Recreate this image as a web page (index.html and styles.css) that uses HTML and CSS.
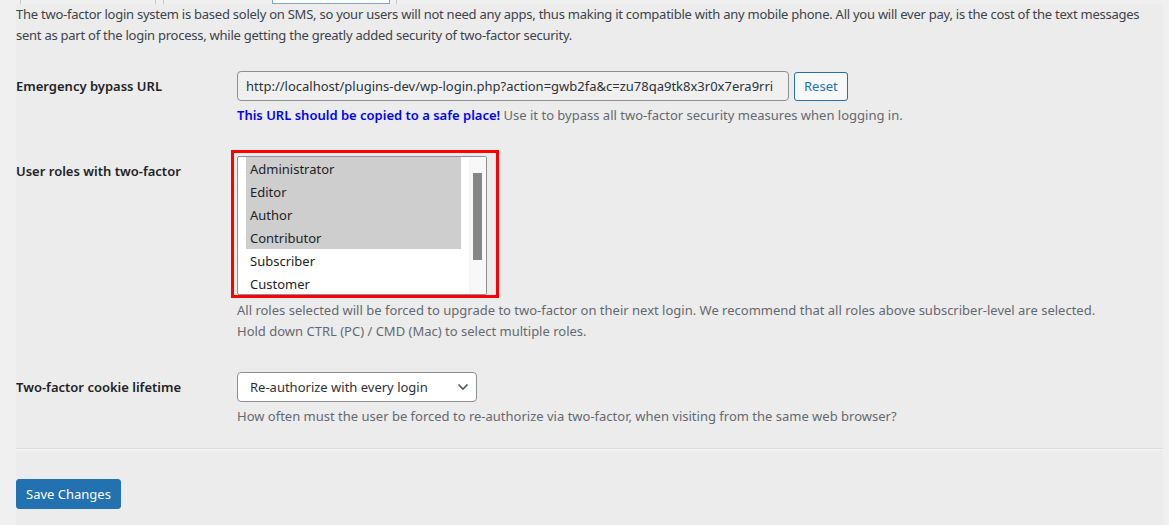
FILE: index.html
```html
<!DOCTYPE html>
<html lang="en">
<head>
<meta charset="utf-8">
<title>Two-factor settings</title>
<link rel="stylesheet" href="styles.css">
</head>
<body>
<div class="tabs">
  <span class="tab tab-a"></span>
  <span class="tab tab-b"></span>
  <span class="tab tab-active"></span>
  <span class="tab tab-d"></span>
</div>
<div class="panel">
  <p class="intro">The two-factor login system is based solely on SMS, so your users will not need any apps, thus making it compatible with any mobile phone. All you will ever pay, is the cost of the text messages sent as part of the login process, while getting the greatly added security of two-factor security.</p>

  <div class="row row-url">
    <div class="label">Emergency bypass URL</div>
    <div class="field">
      <div class="inline">
        <div class="text-input">http://localhost/plugins-dev/wp-login.php?action=gwb2fa&amp;c=zu78qa9tk8x3r0x7era9rri</div>
        <button class="btn-secondary" type="button">Reset</button>
      </div>
      <p class="desc"><strong class="warn">This URL should be copied to a safe place!</strong> Use it to bypass all two-factor security measures when logging in.</p>
    </div>
  </div>

  <div class="row row-roles">
    <div class="label">User roles with two-factor</div>
    <div class="field">
      <div class="highlight">
        <div class="listbox">
          <div class="options">
            <div class="opt selected">Administrator</div>
            <div class="opt selected">Editor</div>
            <div class="opt selected">Author</div>
            <div class="opt selected">Contributor</div>
            <div class="opt">Subscriber</div>
            <div class="opt">Customer</div>
          </div>
          <div class="scrolltrack"><div class="thumb"></div></div>
        </div>
      </div>
      <p class="desc desc-roles">All roles selected will be forced to upgrade to two-factor on their next login. We recommend that all roles above subscriber-level are selected.<br>Hold down CTRL (PC) / CMD (Mac) to select multiple roles.</p>
    </div>
  </div>

  <div class="row row-cookie">
    <div class="label">Two-factor cookie lifetime</div>
    <div class="field">
      <div class="dropdown">
        <span>Re-authorize with every login</span>
        <svg class="chev" width="12" height="8" viewBox="0 0 12 8"><path d="M1.5 1.5 L6 6 L10.5 1.5" fill="none" stroke="#50575e" stroke-width="1.6"/></svg>
      </div>
      <p class="desc">How often must the user be forced to re-authorize via two-factor, when visiting from the same web browser?</p>
    </div>
  </div>

  <hr class="sep">

  <button class="btn-primary" type="button">Save Changes</button>
</div>
</body>
</html>
```

FILE: styles.css
```css
html, body {
  margin: 0;
  padding: 0;
}
body {
  background: #f0f0f1;
  font-family: "Noto Sans", "Open Sans", sans-serif;
  font-size: 13px;
  color: #3c434a;
  width: 1169px;
  height: 525px;
  overflow: hidden;
}
.tabs {
  display: flex;
  height: 4px;
}
.tab {
  height: 4px;
  box-sizing: border-box;
}
.tab-a {
  margin-left: 20px;
  width: 136px;
  border-left: 1px solid #c3c4c7;
  border-right: 1px solid #c3c4c7;
}
.tab-b {
  margin-left: 7px;
  width: 101px;
  border-left: 1px solid #c3c4c7;
}
.tab-active {
  margin-left: 8px;
  width: 118px;
  background: #fff;
  border: 1px solid #7fa6cc;
  border-top: none;
}
.tab-d {
  margin-left: 6px;
  width: 100px;
  border-left: 1px solid #c3c4c7;
}
.panel {
  margin-left: 16px;
  width: 1147px;
  height: 521px;
  background: #ececec;
}
.intro {
  margin: 0;
  line-height: 21px;
  width: 1147px;
  letter-spacing: -0.25px;
}
.row {
  display: grid;
  grid-template-columns: 221px 1fr;
  padding-top: 30px;
}
.row-url {
  padding-top: 25px;
}
.label {
  font-weight: 600;
  color: #1d2327;
  line-height: 30px;
}
.inline {
  display: flex;
  align-items: center;
  gap: 5px;
}
.text-input {
  box-sizing: border-box;
  width: 552px;
  height: 30px;
  border: 1px solid #8c8f94;
  border-radius: 4px;
  background: #f0f0f1;
  color: #2c3338;
  padding: 0 8px;
  line-height: 28px;
  white-space: nowrap;
  overflow: hidden;
}
.btn-secondary {
  box-sizing: border-box;
  height: 29px;
  padding: 0 9px;
  border: 1px solid #2271b1;
  border-radius: 3px;
  background: #f6f7f7;
  color: #2271b1;
  font-family: inherit;
  font-size: 13px;
  line-height: 27px;
}
.desc {
  margin: 4px 0 0;
  line-height: 21px;
  color: #646970;
}
.desc-roles {
  margin-top: 2px;
}
.warn {
  color: #0000ff;
  font-weight: 600;
}
.highlight {
  width: 252px;
  border: 3px solid #ff0000;
  padding: 3px 7px 0 3px;
  margin: -6px 0 0 -6px;
}
.listbox {
  box-sizing: border-box;
  width: 250px;
  height: 139px;
  border: 1px solid #8c8f94;
  border-radius: 2px;
  background: #fff;
  display: flex;
  padding-left: 8px;
  overflow: hidden;
}
.options {
  width: 215px;
}
.opt {
  height: 23px;
  line-height: 24px;
  padding-left: 4px;
  color: #1d2327;
}
.opt.selected {
  background: #cecece;
}
.scrolltrack {
  margin-left: 8px;
  width: 17px;
  background: #f8f8f8;
  display: flex;
  justify-content: center;
  padding-top: 16px;
}
.thumb {
  width: 9px;
  height: 87px;
  background: #868686;
}
.dropdown {
  box-sizing: border-box;
  width: 240px;
  height: 30px;
  border: 1px solid #8c8f94;
  border-radius: 4px;
  background: #fff;
  color: #2c3338;
  display: flex;
  align-items: center;
  justify-content: space-between;
  padding: 0 7px 0 12px;
}
.chev {
  display: block;
}
.sep {
  margin: 21px 0 0;
  border: none;
  border-top: 1px solid #dcdcde;
  border-bottom: 1px solid #f6f7f7;
  height: 0;
}
.btn-primary {
  margin-top: 29px;
  box-sizing: border-box;
  height: 30px;
  padding: 0 9px;
  border: 1px solid #2271b1;
  border-radius: 3px;
  background: #2271b1;
  color: #fff;
  font-family: inherit;
  font-size: 13px;
  line-height: 28px;
}
```
